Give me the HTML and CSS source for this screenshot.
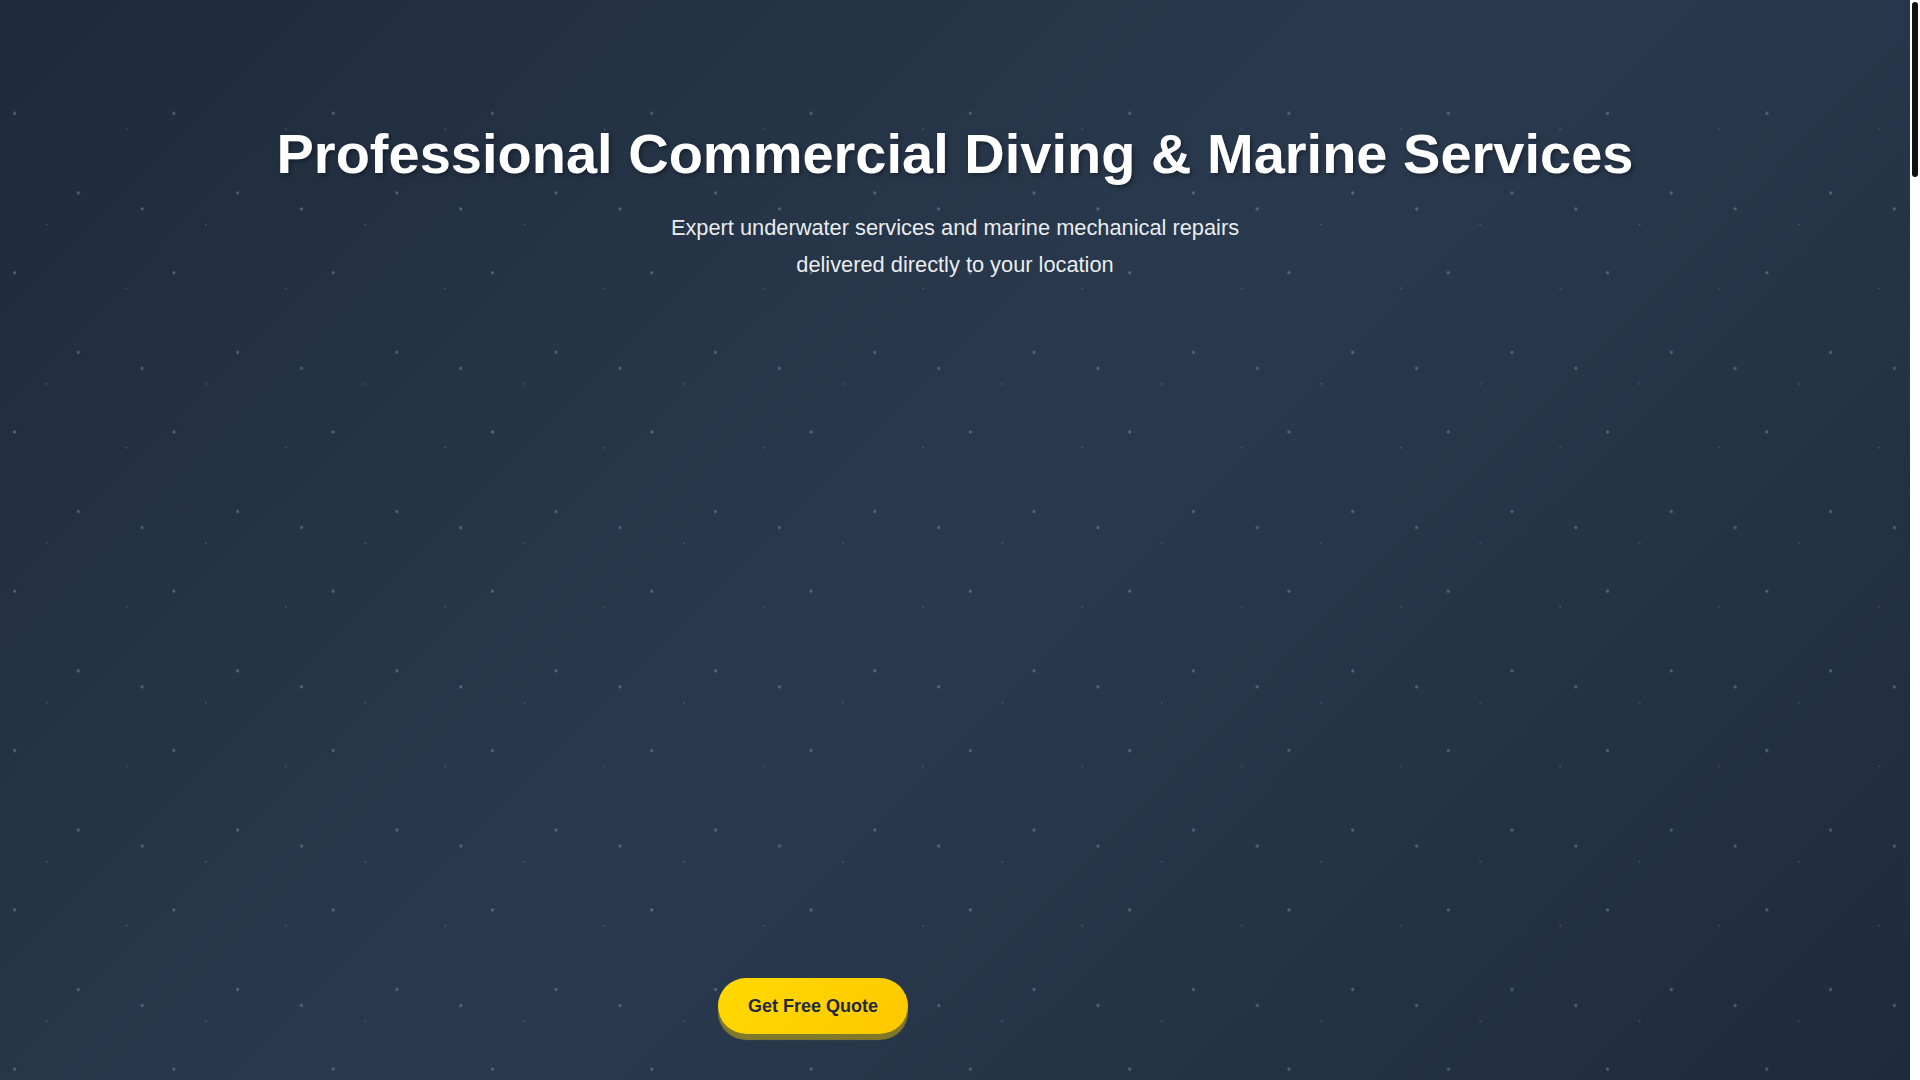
FILE: index.html
```html
<!DOCTYPE html>
<html lang="en">
<head>
<meta charset="utf-8">
<title>Professional Commercial Diving &amp; Marine Services</title>
<link rel="stylesheet" href="styles.css">
</head>
<body>
  <div class="page">
    <main class="main">
      <section class="hero">
        <div class="hero-content">
          <h1 class="hero-title">Professional Commercial Diving &amp; Marine Services</h1>
          <p class="hero-subtitle">Expert underwater services and marine mechanical repairs delivered directly to your location</p>
          <div class="hero-spacer" aria-hidden="true"></div>
          <div class="hero-actions">
            <a class="btn btn-primary" href="#quote">Get Free Quote</a>
            <a class="btn btn-ghost" href="#call" aria-hidden="true">Call Now</a>
          </div>
        </div>
      </section>
    </main>
    <div class="scroll-rail" aria-hidden="true"><div class="scroll-thumb"></div></div>
  </div>
</body>
</html>
```

FILE: styles.css
```css
html, body {
  margin: 0;
  padding: 0;
  height: 100%;
  overflow: hidden;
}

body {
  font-family: "Liberation Sans", Arial, Helvetica, sans-serif;
  background: #1e293b;
  color: #fff;
}

.page {
  display: grid;
  grid-template-columns: 1fr 10px;
  height: 100vh;
}

.main {
  min-width: 0;
}

.scroll-rail {
  background: #ffffff;
  padding: 2px 2px 0;
}

.scroll-thumb {
  height: 175px;
  background: #111111;
  border-radius: 3px;
}

.hero {
  position: relative;
  height: 100vh;
  box-sizing: border-box;
  padding-top: 120px;
  background: linear-gradient(135deg, #1d2a3b 0%, #2a3a4e 50%, #1e2b3d 100%);
}

.hero::before {
  content: "";
  position: absolute;
  inset: 0;
  pointer-events: none;
  background-image:
    radial-gradient(circle at 78.3px 33.7px, rgba(190, 205, 225, 0.42) 0, rgba(190, 205, 225, 0.25) 1.2px, transparent 2.1px),
    radial-gradient(circle at 142.2px 49.7px, rgba(190, 205, 225, 0.42) 0, rgba(190, 205, 225, 0.25) 1.2px, transparent 2.1px),
    radial-gradient(circle at 46.6px 65.4px, rgba(190, 205, 225, 0.25) 0, rgba(190, 205, 225, 0.12) 0.8px, transparent 1.5px),
    radial-gradient(circle at 14.6px 113.4px, rgba(190, 205, 225, 0.42) 0, rgba(190, 205, 225, 0.25) 1.2px, transparent 2.1px),
    radial-gradient(circle at 126.6px 129.1px, rgba(190, 205, 225, 0.25) 0, rgba(190, 205, 225, 0.12) 0.8px, transparent 1.5px);
  background-size: 159.3px 159.3px;
  background-repeat: repeat;
  -webkit-mask-image: linear-gradient(to bottom, transparent 0, transparent 92px, #000 104px);
  mask-image: linear-gradient(to bottom, transparent 0, transparent 92px, #000 104px);
}

.hero-content {
  position: relative;
  display: flex;
  flex-direction: column;
  align-items: center;
  text-align: center;
}

.hero-title {
  margin: 0 0 22px;
  font-size: 56px;
  line-height: 1.2;
  font-weight: 700;
  color: #ffffff;
  text-shadow: 2px 2px 4px rgba(0, 0, 0, 0.35);
}

.hero-subtitle {
  margin: 1px 0 0;
  max-width: 600px;
  font-size: 21.8px;
  line-height: 1.68;
  color: rgba(255, 255, 255, 0.93);
}

.hero-spacer {
  height: 695px;
}

.hero-actions {
  display: flex;
  gap: 16px;
  justify-content: center;
}

.btn {
  display: inline-flex;
  align-items: center;
  justify-content: center;
  box-sizing: border-box;
  height: 56px;
  padding: 0 20px;
  border-radius: 999px;
  font-size: 18px;
  font-weight: 700;
  white-space: nowrap;
  text-decoration: none;
}

.btn-primary {
  width: 190px;
  background: linear-gradient(135deg, #ffd900 0%, #ffc800 100%);
  color: #1f2a3a;
  box-shadow: 0 6px 1px rgba(255, 215, 0, 0.42);
}

.btn-ghost {
  width: 268px;
  visibility: hidden;
}
```
